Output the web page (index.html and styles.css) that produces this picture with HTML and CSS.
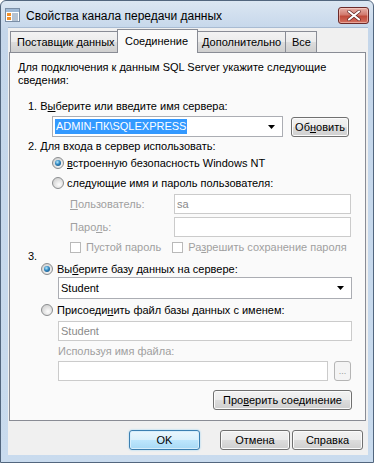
FILE: index.html
```html
<!DOCTYPE html>
<html lang="ru">
<head>
    <meta charset="UTF-8">
    <title>Свойства канала передачи данных</title>
    <link rel="stylesheet" href="styles.css">
</head>
<body>
    <div class="window">
        <div class="titlebar">
            <svg class="app-icon" width="15" height="14" viewBox="0 0 15 14">
                <rect x="0.5" y="0.5" width="14" height="13" fill="#fff" stroke="#7a8ea6"/>
                <rect x="1" y="1" width="13" height="3" fill="#9fb9d6"/>
                <rect x="2" y="5" width="4" height="3" fill="#f0902c"/>
                <rect x="2" y="9" width="4" height="3" fill="#f0902c"/>
                <path d="M7 6h6M7 8h6M7 10h6M7 12h6" stroke="#6d87a8" stroke-width="1"/>
            </svg>
            <span class="title">Свойства канала передачи данных</span>
            <div class="close-btn">
                <svg width="14" height="11" viewBox="0 0 14 11">
                    <path d="M2 1.5l10 8M12 1.5l-10 8" stroke="#5a1f1f" stroke-width="3.4" stroke-linecap="round"/>
                    <path d="M2 1.5l10 8M12 1.5l-10 8" stroke="#fff" stroke-width="2.2" stroke-linecap="round"/>
                </svg>
            </div>
        </div>

        <div class="client">
            <div class="tabs">
                <div class="tab tab-first">Поставщик данных</div>
                <div class="tab active">Соединение</div>
                <div class="tab tab-third">Дополнительно</div>
                <div class="tab tab-last">Все</div>
            </div>

            <div class="panel">
                <p class="intro">Для подключения к данным SQL Server укажите следующие<br>сведения:</p>

                <div class="step step-1">1. В<u>ы</u>берите или введите имя сервера:</div>
                <div class="row server-row">
                    <div class="combo server-combo">
                        <span class="selected-text">ADMIN-ПК\SQLEXPRESS</span>
                        <svg class="arrow" width="7" height="4" viewBox="0 0 7 4"><path d="M0 0h7L3.5 4z"/></svg>
                    </div>
                    <button class="btn refresh-btn">Об<u>н</u>овить</button>
                </div>

                <div class="step step-2">2. Для входа в сервер использовать:</div>
                <div class="row option-row auth-row">
                    <span class="radio on"></span>
                    <span class="option-label"><u>в</u>строенную безопасность Windows NT</span>
                </div>
                <div class="row option-row auth-row">
                    <span class="radio"></span>
                    <span class="option-label">сле<u>д</u>ующие имя и пароль пользователя:</span>
                </div>
                <div class="row field-row">
                    <span class="field-label disabled"><u>П</u>ользователь:</span>
                    <div class="textbox login-box disabled-box">sa</div>
                </div>
                <div class="row field-row pass-row">
                    <span class="field-label disabled">Паро<u>л</u>ь:</span>
                    <div class="textbox login-box disabled-box"></div>
                </div>
                <div class="row check-row">
                    <span class="checkbox"></span>
                    <span class="check-label disabled">Пустой пароль</span>
                    <span class="checkbox second"></span>
                    <span class="check-label disabled">Ра<u>з</u>решить сохранение пароля</span>
                </div>

                <div class="step step-3">3.</div>
                <div class="row option-row db-radio-row">
                    <span class="radio on"></span>
                    <span class="option-label">Вы<u>б</u>ерите базу данных на сервере:</span>
                </div>
                <div class="combo db-combo">
                    <span>Student</span>
                    <svg class="arrow" width="7" height="4" viewBox="0 0 7 4"><path d="M0 0h7L3.5 4z"/></svg>
                </div>
                <div class="row option-row attach-row">
                    <span class="radio"></span>
                    <span class="option-label">Присоеди<u>н</u>ить файл базы данных с именем:</span>
                </div>
                <div class="textbox wide-box disabled-box">Student</div>
                <div class="file-label disabled">Используя имя файла:</div>
                <div class="row file-row">
                    <div class="textbox file-box disabled-box"></div>
                    <button class="btn browse-btn" disabled>...</button>
                </div>
                <div class="row verify-row">
                    <button class="btn verify-btn">Про<u>в</u>ерить соединение</button>
                </div>
            </div>

            <div class="dialog-buttons">
                <button class="btn ok-btn">OK</button>
                <button class="btn cancel-btn">Отмена</button>
                <button class="btn help-btn">Справка</button>
            </div>
        </div>
    </div>
</body>
</html>
```

FILE: styles.css
```css
* {
    box-sizing: border-box;
}

body {
    margin: 0;
    font-family: "Liberation Sans", Arial, sans-serif;
    font-size: 11px;
    color: #000;
    background: #fff;
}

u {
    text-decoration: underline;
    text-underline-offset: 1px;
}

.window {
    width: 374px;
    height: 463px;
    border: 1px solid #52667e;
    border-radius: 6px 6px 0 0;
    background: linear-gradient(#dbe6f2, #c4d6ea 30px, #c9dbee);
    overflow: hidden;
}

.titlebar {
    height: 26px;
    display: flex;
    align-items: center;
    padding-left: 4px;
    padding-top: 1px;
}

.app-icon {
    margin-top: 1px;
}

.title {
    margin-left: 6px;
    font-size: 12px;
    color: #000;
    flex: 1;
    margin-top: 2px;
}

.close-btn {
    width: 31px;
    height: 17px;
    margin-right: 4px;
    margin-top: 2px;
    border: 1px solid #6b2a2a;
    border-radius: 3px;
    background: linear-gradient(#e6b0a8, #d27a6e 45%, #c04a3a 55%, #d37060);
    display: flex;
    align-items: center;
    justify-content: center;
    box-shadow: inset 0 0 0 1px rgba(255, 220, 210, 0.5);
}

.client {
    width: 360px;
    height: 428px;
    margin-left: 7px;
    background: #f0f0f0;
    border-top: 1px solid #a8bbd2;
}

/* вкладки */
.tabs {
    display: flex;
    align-items: flex-end;
    height: 25px;
    padding-top: 1px;
    margin-bottom: -1px;
    position: relative;
    z-index: 1;
    white-space: nowrap;
}

.tab {
    height: 21px;
    margin-bottom: 1px;
    border: 1px solid #898c95;
    border-bottom: none;
    background: linear-gradient(#f3f3f3, #ebebeb 50%, #dddddd 50%, #cfcfcf);
    display: flex;
    align-items: center;
    padding-left: 6px;
    line-height: 14px;
}

.tab-first {
    margin-left: 2px;
    width: 109px;
}

.tab.active {
    width: 81px;
    height: 24px;
    margin: 0 -2px 0 -2px;
    background: #fafafa;
    padding-left: 7px;
    padding-bottom: 2px;
    position: relative;
    z-index: 2;
}

.tab-third {
    width: 90px;
    padding-left: 5px;
}

.tab-last {
    width: 32px;
    margin-left: -1px;
    padding-left: 6px;
}

.panel {
    width: 357px;
    margin-left: 1px;
    border: 1px solid #898c95;
    background: #fafafa;
    padding-top: 8px;
    padding-bottom: 10px;
    line-height: 13px;
    white-space: nowrap;
}

.intro {
    margin: 0 0 0 8px;
}

.disabled {
    color: #a0a0a0;
}

.step {
    margin-left: 18px;
    height: 13px;
}

.step-1 {
    margin-top: 13px;
}

.step-2 {
    margin-top: 3px;
}

.step-3 {
    margin-top: -6px;
}

.row {
    display: flex;
    align-items: center;
}

.server-row {
    margin-top: 3px;
    height: 21px;
}

.combo {
    height: 21px;
    border: 1px solid #abadb3;
    background: #fff;
    display: flex;
    align-items: center;
    justify-content: space-between;
    padding: 0 7px 0 2px;
}

.server-combo {
    margin-left: 42px;
    width: 231px;
}

.selected-text {
    background: #3399ff;
    color: #fff;
    padding: 1px 1px;
    line-height: 13px;
}

.arrow {
    fill: #000;
}

.btn {
    font-family: inherit;
    font-size: 11px;
    height: 20px;
    padding: 0;
    color: #000;
    border: 1px solid #707070;
    border-radius: 3px;
    background: linear-gradient(#f2f2f2, #ebebeb 50%, #dddddd 50%, #cfcfcf);
    box-shadow: inset 0 0 0 1px #fbfbfb;
    line-height: 16px;
}

.refresh-btn {
    margin-left: 8px;
    width: 58px;
}

.option-row {
    height: 20px;
}

.radio {
    width: 12px;
    height: 12px;
    border-radius: 50%;
    border: 1px solid #8b8d8f;
    background: radial-gradient(circle at 60% 65%, #fdfdfd, #dedede 55%, #c8c8c8);
    display: flex;
    align-items: center;
    justify-content: center;
    flex-shrink: 0;
}

.radio.on::after {
    content: "";
    width: 6px;
    height: 6px;
    border-radius: 50%;
    background: radial-gradient(circle at 40% 35%, #b8ecff, #2f86c0 45%, #0e3f6a);
}

.auth-row .radio {
    margin-left: 42px;
}

.option-label {
    margin-left: 3px;
}

.field-row {
    height: 22px;
}

.pass-row {
    margin-top: 1px;
}

.field-label {
    margin-left: 60px;
    width: 104px;
}

.textbox {
    height: 20px;
    border: 1px solid #abadb3;
    background: #fff;
    padding-left: 2px;
    display: flex;
    align-items: center;
}

.disabled-box {
    border-color: #cbcbcb;
    color: #8a8a8a;
}

.login-box {
    width: 177px;
}

.check-row {
    height: 18px;
}

.checkbox {
    width: 11px;
    height: 11px;
    border: 1px solid #b9b9b9;
    background: #fff;
    margin-left: 60px;
    flex-shrink: 0;
}

.checkbox.second {
    margin-left: 11px;
}

.check-label {
    margin-left: 5px;
}

.db-radio-row {
    height: 12px;
}

.db-radio-row .radio,
.attach-row .radio {
    margin-left: 31px;
}

.db-radio-row .option-label,
.attach-row .option-label {
    margin-left: 4px;
}

.db-combo {
    margin: 2px 0 0 48px;
    width: 294px;
    height: 22px;
    padding-left: 2px;
}

.attach-row {
    height: 22px;
}

.wide-box {
    margin-left: 48px;
    width: 294px;
}

.file-label {
    margin-left: 48px;
    height: 20px;
    line-height: 20px;
}

.file-row {
    height: 20px;
}

.file-box {
    margin-left: 48px;
    width: 270px;
}

.browse-btn {
    margin-left: 6px;
    width: 17px;
    height: 20px;
    font-size: 9px;
    line-height: 12px;
    color: #9a9a9a;
    border-color: #b5b5b5;
    background: #f4f4f4;
    box-shadow: none;
}

.verify-row {
    margin-top: 9px;
    justify-content: flex-end;
    padding-right: 13px;
}

.verify-btn {
    width: 139px;
}

.dialog-buttons {
    display: flex;
    margin-top: 9px;
}

.ok-btn {
    margin-left: 121px;
    width: 71px;
    border-color: #3c7fb1;
    background: linear-gradient(#eaf6fd, #d9f0fc 50%, #bee6fd 50%, #a7d9f5);
    box-shadow: inset 0 0 0 1px #d6eefc, 0 0 2px #8fd0f5;
}

.cancel-btn {
    margin-left: 20px;
    width: 70px;
}

.help-btn {
    margin-left: 2px;
    width: 71px;
}
```
